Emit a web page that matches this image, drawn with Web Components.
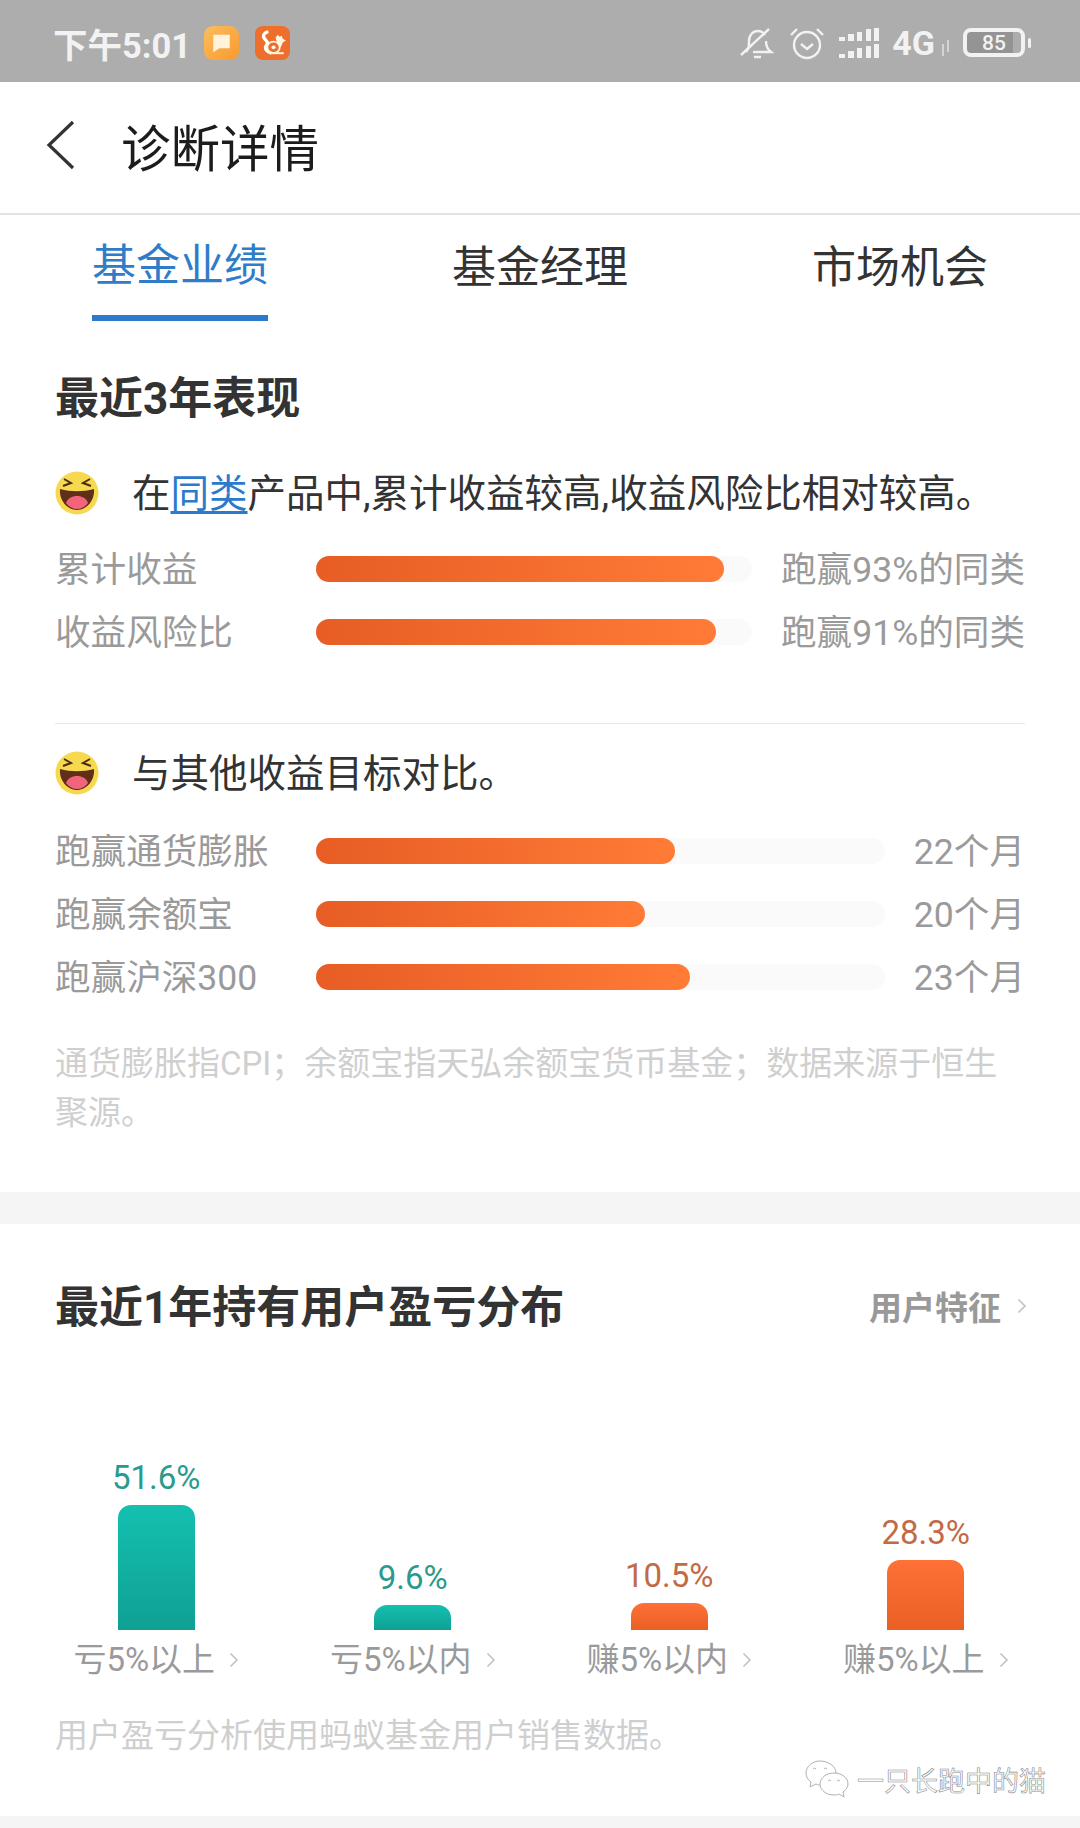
<!DOCTYPE html>
<html lang="zh">
<head>
<meta charset="utf-8">
<title>诊断详情</title>
<style>
  html, body { margin: 0; padding: 0; background: #fff; }
  body { width: 1080px; font-family: Roboto, "Noto Sans CJK SC", sans-serif; }
  body { position: relative; }
</style>
</head>
<body>

<status-bar></status-bar>
<app-header>诊断详情</app-header>
<tab-bar>
  <tab-item active>基金业绩</tab-item>
  <tab-item>基金经理</tab-item>
  <tab-item>市场机会</tab-item>
</tab-bar>

<page-section>
  <section-title style="margin-top:44px">最近3年表现</section-title>
  <intro-line style="margin-top:36px">在<a>同类</a>产品中,累计收益较高,收益风险比相对较高。</intro-line>
  <bar-row style="margin-top:12px" track="436" fill="408">累计收益<span slot="value">跑赢93%的同类</span></bar-row>
  <bar-row track="436" fill="400">收益风险比<span slot="value">跑赢91%的同类</span></bar-row>
  <hr-line style="margin-top:60px"></hr-line>
  <intro-line style="margin-top:17px">与其他收益目标对比。</intro-line>
  <bar-row style="margin-top:14px" track="569" fill="359">跑赢通货膨胀<span slot="value">22个月</span></bar-row>
  <bar-row track="569" fill="329">跑赢余额宝<span slot="value">20个月</span></bar-row>
  <bar-row track="569" fill="374">跑赢沪深300<span slot="value">23个月</span></bar-row>
  <note-text style="margin-top:31px;padding-bottom:55px">通货膨胀指CPI；余额宝指天弘余额宝货币基金；数据来源于恒生聚源。</note-text>
</page-section>

<gray-band style="height:32px"></gray-band>

<page-section>
  <section-title style="margin-top:50px">最近1年持有用户盈亏分布<more-link slot="side">用户特征</more-link></section-title>
  <dist-chart>
    <dist-col tone="loss" value="51.6%" h="125">亏5%以上</dist-col>
    <dist-col tone="loss" value="9.6%" h="25">亏5%以内</dist-col>
    <dist-col tone="gain" value="10.5%" h="27">赚5%以内</dist-col>
    <dist-col tone="gain" value="28.3%" h="70">赚5%以上</dist-col>
  </dist-chart>
  <note-text style="margin-top:21px;padding-bottom:56px">用户盈亏分析使用蚂蚁基金用户销售数据。</note-text>
</page-section>

<gray-band style="height:12px"></gray-band>
<wechat-mark>一只长跑中的猫</wechat-mark>

<script>
  // 小工具：给元素挂上 shadow root
  function mount(el, html) {
    const root = el.attachShadow({ mode: 'open' });
    root.innerHTML = html;
    return root;
  }

  const arrowSvg = `<svg width="10" height="18" viewBox="0 0 10 18" fill="none" stroke="#c2c2c2" stroke-width="1.600"><path d="M1.500 2.500 8 9l-6.500 6.500"/></svg>`;

  class StatusBar extends HTMLElement {
    connectedCallback() {
      mount(this, `
        <style>
          :host { display: flex; align-items: center; height: 82px; background: #adadad; color: #f2f2f2; padding: 3px 49px 0 53px; box-sizing: border-box; }
          .time { font-size: 34.500px; font-weight: 700; width: 151px; white-space: nowrap; }
          .app { display: block; margin-right: 16px; }
          .right { margin-left: auto; display: flex; align-items: center; }
          .right svg { display: block; }
          .net { font: 700 34px Roboto, sans-serif; margin-left: 13px; }
          .batt { width: 62px; height: 29px; margin-left: 12px; border: 4px solid #f2f2f2; border-radius: 8px; box-sizing: border-box; display: flex; align-items: center; justify-content: center; font: 500 21px Roboto, sans-serif; background: linear-gradient(90deg, #949494 0 85%, transparent 85%) content-box; }
          .nib { width: 3px; height: 10px; background: #f2f2f2; border-radius: 2px; margin-left: 3px; }
        </style>
        <span class="time">下午5:01</span>
        <svg class="app" width="35" height="34" viewBox="0 0 34 35" preserveAspectRatio="none">
          <defs><linearGradient id="a" x1="0" y1="0" x2="1" y2="1"><stop offset="0" stop-color="#fdbd5f"/><stop offset="1" stop-color="#f79a2e"/></linearGradient></defs>
          <rect width="34" height="35" rx="9" fill="url(#a)"/>
          <path d="M9 9h16v14H15l-6 4z" fill="#fff3dc"/>
        </svg>
        <svg class="app" width="35" height="34" viewBox="0 0 34 35" preserveAspectRatio="none">
          <rect width="34" height="35" rx="8" fill="#ee6f2c"/>
          <path d="M13 6c-5 1-6 5-3 8 2 2 3 4 1 6-2 3 0 7 5 8" fill="none" stroke="#fff" stroke-width="3.200"/>
          <circle cx="18" cy="22" r="6" fill="none" stroke="#fff3e4" stroke-width="1.800"/>
          <circle cx="18" cy="22" r="2" fill="#fff3e4"/>
          <path d="M20 12l2-3 2 2 2-1 1 3 3 2-3 2-2 5-3-3z" fill="#fff3e4"/>
          <path d="M16 28h12" stroke="#fff3e4" stroke-width="2"/>
        </svg>
        <div class="right">
          <svg width="34" height="34" viewBox="0 0 34 34" fill="none" stroke="#f2f2f2" stroke-width="2.400">
            <path d="M6 26c3-3 3-6 3-11 0-6 4-10 9-10 3 0 5 1 7 4M26 15c0 5 1 8 5 11H13"/>
            <path d="M1 29 29 3M14 31h7"/>
          </svg>
          <svg style="margin-left:15px" width="36" height="34" viewBox="0 0 36 34" fill="none" stroke="#f2f2f2" stroke-width="2.400">
            <circle cx="18" cy="19" r="13"/>
            <path d="M12 18l6 5 6-5M2 9l6-6M34 9l-6-6"/>
          </svg>
          <svg style="margin-left:14px" width="40" height="30" viewBox="0 0 40 30" fill="#f2f2f2">
            <rect x="0" y="9" width="6" height="4"/><rect x="9" y="6" width="6" height="7"/><rect x="18" y="4" width="5" height="9"/><rect x="27" y="1" width="5" height="12"/><rect x="35" y="0" width="5" height="13"/>
            <rect x="0" y="26" width="6" height="4"/><rect x="9" y="23" width="6" height="7"/><rect x="18" y="20" width="5" height="10"/><rect x="27" y="18" width="5" height="12"/><rect x="35" y="16" width="5" height="14"/>
          </svg>
          <span class="net">4G</span>
          <svg style="margin-left:5px;margin-top:10px" width="11" height="16" viewBox="0 0 11 16" fill="#d4d4d4"><path d="M2 4h2v12H2zM7 0h2v12H7z"/></svg>
          <span class="batt">85</span>
          <span class="nib"></span>
        </div>`);
    }
  }

  class AppHeader extends HTMLElement {
    connectedCallback() {
      mount(this, `
        <style>
          :host { display: flex; align-items: center; height: 133px; border-bottom: 2px solid #e2e2e2; box-sizing: border-box; padding-left: 46px; padding-bottom: 5px; color: #1c1c1c; font-size: 49.500px; white-space: nowrap; }
          svg { display: block; margin-right: 46px; }
        </style>
        <svg width="29" height="50" viewBox="0 0 29 50" fill="none" stroke="#333" stroke-width="3.200"><path d="M27 2 3 25l24 23"/></svg>
        <slot></slot>`);
    }
  }

  class TabBar extends HTMLElement {
    connectedCallback() {
      mount(this, `
        <style>:host { display: grid; grid-template-columns: repeat(3, 360px); height: 106px; }</style>
        <slot></slot>`);
    }
  }

  class TabItem extends HTMLElement {
    connectedCallback() {
      mount(this, `
        <style>
          :host { display: flex; flex-direction: column; align-items: center; font-size: 44px; color: #333; }
          .t { height: 100px; display: flex; align-items: center; padding-bottom: 2px; box-sizing: border-box; }
          .u { width: 176px; height: 6px; }
          :host([active]) { color: #2f7cc9; }
          :host([active]) .t { padding-bottom: 6px; }
          :host([active]) .u { background: #2b7acb; }
        </style>
        <div class="t"><slot></slot></div><div class="u"></div>`);
    }
  }

  class PageSection extends HTMLElement {
    connectedCallback() {
      mount(this, `
        <style>:host { display: block; padding: 0 55px; overflow: hidden; }</style>
        <slot></slot>`);
    }
  }

  class SectionTitle extends HTMLElement {
    connectedCallback() {
      mount(this, `
        <style>
          :host { display: flex; align-items: center; justify-content: space-between; height: 60px; font-size: 44px; font-weight: 700; color: #333; white-space: nowrap; }
        </style>
        <span><slot></slot></span><slot name="side"></slot>`);
    }
  }

  class MoreLink extends HTMLElement {
    connectedCallback() {
      mount(this, `
        <style>
          :host { display: flex; align-items: center; gap: 16px; font-size: 33px; font-weight: 700; color: #999; margin-right: -2px; padding-top: 4px; }
        </style>
        <slot></slot>${arrowSvg}`);
    }
  }

  class SmileFace extends HTMLElement {
    connectedCallback() {
      mount(this, `
        <style>:host { display: block; width: 44px; height: 44px; } svg { display: block; }</style>
        <svg width="44" height="44" viewBox="0 0 44 44">
          <circle cx="22" cy="22" r="21.500" fill="#f7d94f"/>
          <path d="M5 18c11 3 23 3 34 0 1 11-7 21-17 21S4 29 5 18z" fill="#5f2f18"/>
          <path d="M11 32c2-5 6-7 11-7s9 2 11 7c-3 4-7 6-11 6s-8-2-11-6z" fill="#f2637c"/>
          <path d="M9 8l7 4-8 3M35 8l-7 4 8 3" fill="none" stroke="#4a2c18" stroke-width="2"/>
        </svg>`);
    }
  }

  class IntroLine extends HTMLElement {
    connectedCallback() {
      // 链接样式要进 shadow，slot 内容用 ::slotted
      mount(this, `
        <style>
          :host { display: flex; align-items: center; height: 64px; font-size: 38.500px; color: #333; white-space: nowrap; }
          smile-face { margin-right: 33px; flex: none; }
          span { padding-bottom: 7px; }
          ::slotted(a) { color: #2b7acb; text-decoration: underline; text-underline-offset: 4px; }
        </style>
        <smile-face></smile-face><span><slot></slot></span>`);
    }
  }

  class BarRow extends HTMLElement {
    connectedCallback() {
      const track = this.getAttribute('track');
      const fill = this.getAttribute('fill');
      mount(this, `
        <style>
          :host { display: flex; align-items: center; height: 63px; font-size: 35.600px; color: #9a9a9a; white-space: nowrap; }
          .label { width: 261px; flex: none; padding-bottom: 5px; }
          .track { width: ${track}px; height: 26px; border-radius: 13px; background: #fafafa; flex: none; }
          .fill { width: ${fill}px; height: 100%; border-radius: 13px; background: linear-gradient(90deg, #e75d25, #ff7b36); }
          .value { margin-left: auto; padding-bottom: 5px; }
        </style>
        <span class="label"><slot></slot></span>
        <div class="track"><div class="fill"></div></div>
        <span class="value"><slot name="value"></slot></span>`);
    }
  }

  class HrLine extends HTMLElement {
    connectedCallback() {
      mount(this, `<style>:host { display: block; height: 1px; background: #e8e8e8; }</style>`);
    }
  }

  class NoteText extends HTMLElement {
    connectedCallback() {
      mount(this, `
        <style>:host { display: block; font-size: 33px; line-height: 49px; color: #cfcfcf; }</style>
        <slot></slot>`);
    }
  }

  class GrayBand extends HTMLElement {
    connectedCallback() {
      mount(this, `<style>:host { display: block; background: #f5f5f5; }</style>`);
    }
  }

  class DistChart extends HTMLElement {
    connectedCallback() {
      mount(this, `
        <style>:host { display: grid; grid-template-columns: repeat(4, 256.500px); height: 356px; margin-left: -27px; align-items: end; }</style>
        <slot></slot>`);
    }
  }

  class DistCol extends HTMLElement {
    connectedCallback() {
      const gain = this.getAttribute('tone') === 'gain';
      const grad = gain ? '#ff7136, #e95f24' : '#14c0b0, #0fa094';
      mount(this, `
        <style>
          :host { display: flex; flex-direction: column; align-items: center; }
          .val { font-size: 33px; line-height: 40px; margin-bottom: 7px; color: ${gain ? '#c26a45' : '#2a9a8e'}; }
          .bar { width: 77px; height: ${this.getAttribute('h')}px; border-radius: 13px 13px 0 0; background: linear-gradient(180deg, ${grad}); }
          .lab { height: 60px; display: flex; align-items: center; gap: 14px; font-size: 33px; color: #9a9a9a; white-space: nowrap; }
          .lab span { padding-bottom: 6px; }
          .lab svg { margin-top: -1px; }
        </style>
        <div class="val">${this.getAttribute('value')}</div>
        <div class="bar"></div>
        <div class="lab"><span><slot></slot></span>${arrowSvg}</div>`);
    }
  }

  // 公众号水印，压在内容上面
  class WechatMark extends HTMLElement {
    connectedCallback() {
      mount(this, `
        <style>
          :host { position: absolute; left: 805px; top: 1759px; display: flex; align-items: center; gap: 8px; height: 40px; font-size: 27px; color: #fff; -webkit-text-stroke: 0.6px #8a8a8a; white-space: nowrap; }
          svg { display: block; flex: none; }
        </style>
        <svg width="44" height="38" viewBox="0 0 44 38" fill="#fff" stroke="#b0b0b0" stroke-width="1">
          <path d="M15 1C8 1 1 6 1 13c0 4 2 7 5 9l-1 5 6-3c2 1 3 1 5 1 8 0 15-5 15-12S23 1 15 1z"/>
          <path d="M29 13c-8 0-14 5-14 11s6 11 14 11c2 0 3 0 5-1l5 3-1-5c3-2 5-5 5-8 0-6-6-11-14-11z"/>
          <path d="M8 9q1.500-2 3 0M19 9q1.500-2 3 0M23 21q1.500-2 3 0M32 21q1.500-2 3 0"/>
        </svg>
        <slot></slot>`);
    }
  }

  customElements.define('status-bar', StatusBar);
  customElements.define('app-header', AppHeader);
  customElements.define('tab-bar', TabBar);
  customElements.define('tab-item', TabItem);
  customElements.define('page-section', PageSection);
  customElements.define('section-title', SectionTitle);
  customElements.define('more-link', MoreLink);
  customElements.define('smile-face', SmileFace);
  customElements.define('intro-line', IntroLine);
  customElements.define('bar-row', BarRow);
  customElements.define('hr-line', HrLine);
  customElements.define('note-text', NoteText);
  customElements.define('gray-band', GrayBand);
  customElements.define('dist-chart', DistChart);
  customElements.define('dist-col', DistCol);
  customElements.define('wechat-mark', WechatMark);
</script>
</body>
</html>
